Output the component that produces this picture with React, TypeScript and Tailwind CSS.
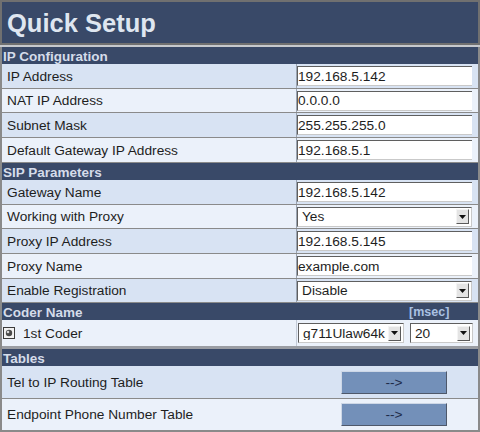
import React from 'react';

type Tone = 'dark' | 'light';

const rowTone = (tone: Tone) => (tone === 'dark' ? 'bg-[#d8e3f3]' : 'bg-[#ebf1fa]');

const SectionHeader: React.FC<{ title: string; extra?: React.ReactNode }> = ({ title, extra }) => (
  <div className="h-[17px] bg-[#394968] flex items-center pl-[1px] pt-[2px] text-[13.5px] font-bold leading-none text-[#d5dcea]">
    <span className="flex-1">{title}</span>
    {extra}
  </div>
);

const TextInput: React.FC<{ value: string }> = ({ value }) => (
  <div className="h-[20px] w-[175px] bg-white border-t border-l border-[#5f5f5f] border-b border-b-[#c9c9c9] flex items-center pt-[1px] leading-none overflow-hidden whitespace-nowrap">
    {value}
  </div>
);

const Arrow: React.FC = () => (
  <div className="h-[15px] w-[13px] bg-[#e4e4e4] border border-t-[#f4f4f4] border-l-[#f4f4f4] border-b-[#5a5a5a] border-r-[#5a5a5a] flex items-center justify-center">
    <svg width="7" height="4" viewBox="0 0 7 4">
      <path d="M0 0h7L3.5 4z" fill="#111" />
    </svg>
  </div>
);

const Select: React.FC<{ value: string; width: string }> = ({ value, width }) => (
  <div
    className={`h-[20px] ${width} bg-white border-t border-l border-[#5f5f5f] border-b border-b-[#c9c9c9] border-r border-r-[#c9c9c9] flex items-center pr-[2px] leading-none`}
  >
    <span className="flex-1 pl-[4px] pt-[1px] overflow-hidden whitespace-nowrap">{value}</span>
    <Arrow />
  </div>
);

const FieldRow: React.FC<{ label: string; tone: Tone; h: string; children: React.ReactNode }> = ({
  label,
  tone,
  h,
  children,
}) => (
  <div className={`flex ${h} border-b border-[#8a8a8a] ${rowTone(tone)}`}>
    <div className="w-[295px] border-r border-[#9aa4b2] pl-[5px] pt-[2px] flex items-center">{label}</div>
    <div className="flex-1 flex items-center">{children}</div>
  </div>
);

const TableRow: React.FC<{ label: string; tone: Tone; h: string; border?: boolean }> = ({ label, tone, h, border }) => (
  <div className={`flex items-center ${h} ${border ? 'border-b border-[#8a8a8a]' : ''} ${rowTone(tone)}`}>
    <div className="w-[339px] pl-[5px] pt-[2px]">{label}</div>
    <button className="h-[23px] w-[106px] bg-[#7390b9] border border-t-[#cdd7e6] border-l-[#cdd7e6] border-b-[#4e586a] border-r-[#4e586a] text-[#1d2b49] text-[13.7px] leading-none pt-[1px]">
      --&gt;
    </button>
  </div>
);

const CoderIcon: React.FC = () => (
  <svg width="12" height="12" viewBox="0 0 12 12" className="shrink-0">
    <rect x="0.5" y="0.5" width="11" height="11" fill="#f2f2f2" stroke="#3c3c3c" />
    <circle cx="6" cy="6" r="3.2" fill="#4a4a4a" />
    <circle cx="5" cy="5" r="1.3" fill="#d8d8d8" />
  </svg>
);

export default function App() {
  return (
    <div
      className="w-[480px] h-[432px] overflow-hidden bg-[#c6c9ce] text-[13.7px] text-[#1e1e1e]"
      style={{ fontFamily: '"Liberation Sans", Arial, sans-serif' }}
    >
      {/* Title */}
      <div className="h-[45px] bg-[#394968] border-2 border-[#707070] flex items-center pl-[5px] pt-[3px]">
        <span className="text-[25.5px] font-bold leading-none text-[#dfe6f0]">Quick Setup</span>
      </div>
      <div className="h-[2px]" />

      <div className="border-l-2 border-r-2 border-[#8a8a8a]">
        <SectionHeader title="IP Configuration" />
        <FieldRow label="IP Address" tone="dark" h="h-[25px]">
          <TextInput value="192.168.5.142" />
        </FieldRow>
        <FieldRow label="NAT IP Address" tone="light" h="h-[24px]">
          <TextInput value="0.0.0.0" />
        </FieldRow>
        <FieldRow label="Subnet Mask" tone="dark" h="h-[25px]">
          <TextInput value="255.255.255.0" />
        </FieldRow>
        <FieldRow label="Default Gateway IP Address" tone="light" h="h-[25px]">
          <TextInput value="192.168.5.1" />
        </FieldRow>

        <SectionHeader title="SIP Parameters" />
        <FieldRow label="Gateway Name" tone="dark" h="h-[25px]">
          <TextInput value="192.168.5.142" />
        </FieldRow>
        <FieldRow label="Working with Proxy" tone="light" h="h-[24px]">
          <Select value="Yes" width="w-[175px]" />
        </FieldRow>
        <FieldRow label="Proxy IP Address" tone="dark" h="h-[25px]">
          <TextInput value="192.168.5.145" />
        </FieldRow>
        <FieldRow label="Proxy Name" tone="light" h="h-[25px]">
          <TextInput value="example.com" />
        </FieldRow>
        <FieldRow label="Enable Registration" tone="dark" h="h-[24px]">
          <Select value="Disable" width="w-[175px]" />
        </FieldRow>

        <SectionHeader
          title="Coder Name"
          extra={<span className="w-[69px] text-[12.5px] text-[#a9c0e2]">[msec]</span>}
        />
        <div className="flex h-[26px] bg-[#ebf1fa]">
          <div className="w-[295px] border-r border-[#c2cad6] flex items-center gap-[8px] pl-[1px]">
            <CoderIcon />
            <span className="pt-[2px]">1st Coder</span>
          </div>
          <div className="flex-1 flex items-center gap-[6px] pl-[1px]">
            <Select value="g711Ulaw64k" width="w-[106px]" />
            <Select value="20" width="w-[63px]" />
          </div>
        </div>
        <div className="h-[3px] bg-[#9a9da3]" />

        <SectionHeader title="Tables" />
        <TableRow label="Tel to IP Routing Table" tone="dark" h="h-[33px]" border />
        <TableRow label="Endpoint Phone Number Table" tone="light" h="h-[31px]" />
      </div>
      <div className="h-[3px] bg-[#8a8a8a]" />
    </div>
  );
}
